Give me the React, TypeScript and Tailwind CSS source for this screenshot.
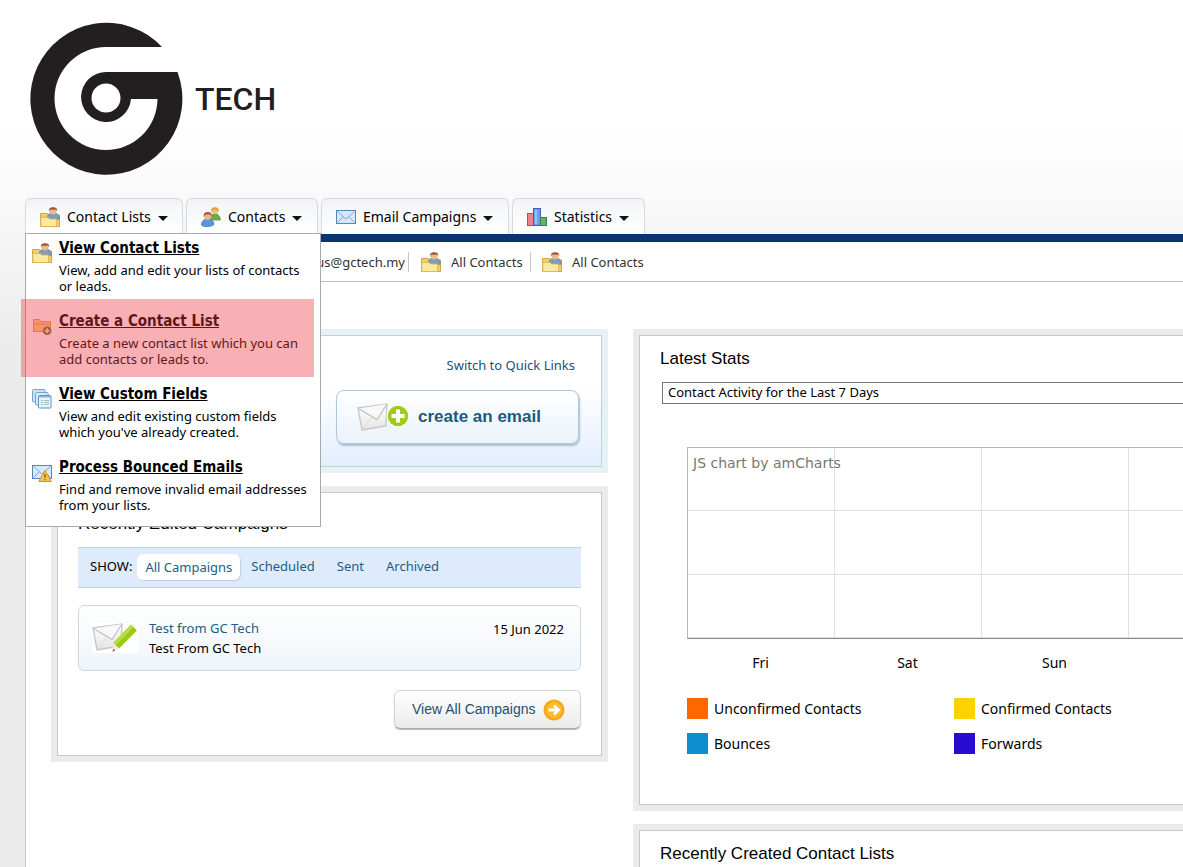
import React from 'react';

const BODY = "font-['Noto_Sans','Open_Sans',sans-serif]";
const WIDE = "font-['DejaVu_Sans_Condensed','DejaVu_Sans',sans-serif]";
const ARIAL = "font-['Liberation_Sans',Arial,sans-serif]";

const FolderUserIcon = () => (
  <svg width="20" height="20" viewBox="0 0 20 20" className="shrink-0" aria-hidden="true">
    <path d="M0.5 6.5h7l1 1.5h11v11.5H0.5z" fill="#f3cf6a" stroke="#d3a348" />
    <path d="M7 12c0-4 2-6 6-6s6 1.500 6.500 6l-2.500.5H7z" fill="#7d9db9" stroke="#5f7f9c" strokeWidth=".7" />
    <circle cx="13" cy="4" r="3.500" fill="#eab98f" />
    <path d="M9 4.500C8.500 1 10.500.2 13 .2s4.700.8 4.200 4.300c-.6-1.600-1-2-2-2-2 .4-3.500.2-4.600 0-.8.3-1.300 1-1.600 2z" fill="#9a5a34" />
    <path d="M.8 10.500h7.500l1 1.500h7.200v7.500H.8z" fill="#fbe9a0" stroke="#dcb254" strokeWidth=".8" />
  </svg>
);

const PeopleIcon = () => (
  <svg width="20" height="20" viewBox="0 0 20 20" className="shrink-0" aria-hidden="true">
    <path d="M9 13c0-4 2-6 5-6s5.300 2 5.300 6z" fill="#6cb04d" stroke="#4a8b34" strokeWidth=".7" />
    <circle cx="14" cy="4" r="3.300" fill="#efc07c" />
    <path d="M10.400 5c-.7-3.500 1.100-4.800 3.600-4.800S18.200 1.500 17.700 5c-.6-1.700-1.500-2.200-3.500-2.200S11 3.400 10.400 5z" fill="#e0a232" />
    <path d="M.5 18c0-4 2.500-6 6.300-6s6 2 6 5.500c-2 2.500-10 3-12.300.5z" fill="#5b93e0" stroke="#356bb9" strokeWidth=".7" />
    <circle cx="6.800" cy="9.300" r="3.700" fill="#e9b58b" />
    <path d="M2.800 10c-.6-4 1.500-5 4-5s4.500 1.200 4 5c-.7-2-1.700-2.400-3.800-2.400S3.500 8 2.800 10z" fill="#a65e3c" />
  </svg>
);

const MailIcon = ({ warn = false }: { warn?: boolean }) => (
  <svg width="20" height="20" viewBox="0 0 20 20" className="shrink-0" aria-hidden="true">
    <rect x=".5" y="3.500" width="19" height="13" fill="#d7e8fa" stroke="#5585bd" />
    <path d="M1.500 4.500l8.500 7.500 8.500-7.500M1.500 15.500l6-6M18.500 15.500l-6-6" fill="none" stroke="#83a9d6" />
    {warn && (
      <>
        <path d="M13 8.500l6.300 11H6.700z" fill="#f8c44f" stroke="#cf9327" strokeLinejoin="round" />
        <path d="M13 12v4M13 17v1.300" stroke="#8a5a12" strokeWidth="1.300" />
      </>
    )}
  </svg>
);

const BarsIcon = () => (
  <svg width="20" height="18" viewBox="0 0 20 18" className="shrink-0" aria-hidden="true">
    <rect x=".5" y="5.500" width="6" height="12" fill="#ee8087" stroke="#c5474f" />
    <rect x="6.500" y=".5" width="7" height="17" fill="#6d9ce8" stroke="#3763b4" />
    <rect x="8" y="2" width="2" height="14" fill="#9dc0f5" />
    <rect x="13.500" y="9.500" width="6" height="8" fill="#67b06c" stroke="#3d7f47" />
  </svg>
);

const FolderAddIcon = () => (
  <svg width="20" height="20" viewBox="0 0 20 20" className="shrink-0" aria-hidden="true">
    <path d="M1.500 15.500v-12h6l1.500 2h9.500v10z" fill="#f9d08a" stroke="#e0a050" />
    <path d="M1.500 8h17" stroke="#e0a050" />
    <circle cx="15.200" cy="14.800" r="4.300" fill="#72743a" />
    <path d="M15.200 12.300v5M12.700 14.800h5" stroke="#e8f0d0" strokeWidth="1.600" />
  </svg>
);

const FieldsIcon = () => (
  <svg width="20" height="20" viewBox="0 0 20 20" className="shrink-0" aria-hidden="true">
    <rect x=".5" y=".5" width="12.500" height="12.500" rx="1" fill="#cfe2f5" stroke="#76a3d0" />
    <rect x="3.500" y="3.500" width="12.500" height="12.500" rx="1" fill="#d9e9f8" stroke="#76a3d0" />
    <rect x="6.500" y="6.500" width="12.500" height="12.500" rx="1" fill="#eaf4fd" stroke="#5f92c4" />
    <path d="M7 7.800h12" stroke="#8fb8df" strokeWidth="1.600" />
    <path d="M9 11.500h2M12 11.500h5M9 13.500h2M12 13.500h5M9 15.500h2M12 15.500h5" stroke="#9dbcc4" />
  </svg>
);

const EnvelopeArt = () => (
  <>
    <path d="M1 5l29-4-1 22L5 27z" fill="url(#paper)" stroke="#c4c4c4" strokeWidth="1.300" />
    <path d="M1.500 5.500L20 16.500 30 1" fill="#f8f8f8" stroke="#c2c2c2" strokeWidth="1.300" />
    <path d="M5 26.500l10-12" stroke="#dedede" />
    <defs>
      <linearGradient id="paper" x1="0" y1="0" x2="0" y2="1">
        <stop offset="0" stopColor="#fff" />
        <stop offset="1" stopColor="#e4e4e4" />
      </linearGradient>
    </defs>
  </>
);

const NewEmailIcon = () => (
  <svg width="52" height="28" viewBox="0 0 52 28" className="shrink-0" aria-hidden="true">
    <EnvelopeArt />
    <circle cx="41" cy="13" r="11.500" fill="#fff" />
    <circle cx="41" cy="13" r="10.300" fill="#9fcb1b" />
    <path d="M41 6.500v13M34.500 13h13" stroke="#fff" strokeWidth="4" />
  </svg>
);

const EditEmailIcon = () => (
  <svg width="46" height="30" viewBox="0 0 46 30" className="shrink-0" aria-hidden="true">
    <rect width="46" height="30" fill="#fff" />
    <EnvelopeArt />
    <path d="M39 1.500l6 6L27 25.500l-6-5.500z" fill="#9cc918" />
    <path d="M39 1.500l2.500 2.500L23.500 22.500l-2.500-2.500z" fill="#b9dd45" />
    <path d="M21 20l6 5.500-6.500 3z" fill="#f3ead0" />
    <path d="M20.300 28.800l1-3 2 1.800z" fill="#777" />
  </svg>
);

const Caret = () => (
  <svg width="10" height="5" viewBox="0 0 10 5" className="mt-1 shrink-0" aria-hidden="true">
    <path d="M0 0h10L5 5z" fill="#111" />
  </svg>
);

const tabs = [
  { label: 'Contact Lists', icon: <FolderUserIcon />, extraClasses: 'w-[158px]' },
  { label: 'Contacts', icon: <PeopleIcon />, extraClasses: 'w-[132px]' },
  { label: 'Email Campaigns', icon: <MailIcon />, extraClasses: 'w-[188px]' },
  { label: 'Statistics', icon: <BarsIcon />, extraClasses: 'w-[133px]' },
];

const menuItems = [
  {
    title: 'View Contact Lists',
    desc: 'View, add and edit your lists of contacts or leads.',
    icon: <FolderUserIcon />,
  },
  {
    title: 'Create a Contact List',
    desc: 'Create a new contact list which you can add contacts or leads to.',
    icon: <FolderAddIcon />,
    active: true,
  },
  {
    title: 'View Custom Fields',
    desc: "View and edit existing custom fields which you've already created.",
    icon: <FieldsIcon />,
  },
  {
    title: 'Process Bounced Emails',
    desc: 'Find and remove invalid email addresses from your lists.',
    icon: <MailIcon warn />,
  },
];

const legend = [
  { label: 'Unconfirmed Contacts', colorClass: 'bg-[#ff6600]' },
  { label: 'Confirmed Contacts', colorClass: 'bg-[#fcd202]' },
  { label: 'Bounces', colorClass: 'bg-[#0d8ecf]' },
  { label: 'Forwards', colorClass: 'bg-[#2a0cd0]' },
];

const Logo = () => (
  <a href="#" className="flex items-center gap-3 text-[#231f20] no-underline">
    <svg width="153" height="153" viewBox="0 0 153 153" className="shrink-0" aria-hidden="true">
      <path
        d="M132 25H76.500A51.500 51.500 0 1 0 127.500 77H101A25 25 0 1 1 76.500 50H147.500A76 76 0 1 1 132 25z"
        fill="#231f20"
      />
      <circle cx="76" cy="76" r="14.500" fill="#fff" />
    </svg>
    <span className="font-[Roboto,sans-serif] text-[32px] font-medium">TECH</span>
  </a>
);

interface PanelProps {
  outerClasses?: string;
  innerClasses?: string;
  children: React.ReactNode;
}

const Panel: React.FC<PanelProps> = ({
  outerClasses = 'border-[#ebebeb]',
  innerClasses = 'border-[#c8c8c8] bg-white',
  children,
}) => (
  <section className={`flex flex-col border-[6px] ${outerClasses}`}>
    <div className={`flex-1 border px-5 ${innerClasses}`}>{children}</div>
  </section>
);

const DropdownMenu = () => (
  <div className="absolute left-0 top-[35px] z-20 w-[296px] border border-[#a9a9a9] bg-white">
    {menuItems.map((item) => (
      <a key={item.title} href="#" className="relative flex h-[73px] gap-[7px] pl-[6px] pr-3 pt-1 text-black">
        <span className="pt-[5px]">{item.icon}</span>
        <span className="block">
          <span className={`block text-[15px] font-bold leading-5 underline ${WIDE}`}>{item.title}</span>
          <span className="mt-[4px] block text-[13px] leading-4">{item.desc}</span>
        </span>
        {item.active && <span className="absolute -left-[5px] -top-2 h-[78px] w-[293px] bg-[#ee3a44]/40" />}
      </a>
    ))}
  </div>
);

const Chart = () => (
  <div className="ml-[27px] mt-[43px] text-[14px]">
    <div className="relative grid h-[192px] grid-cols-[repeat(4,147px)] grid-rows-3 border-b border-l border-t border-b-[#888] border-l-[#b5b5b5] border-t-[#b5b5b5]">
      {Array.from({ length: 12 }, (_, i) => (
        <div key={i} className="border-b border-r border-[#e0e0e0]" />
      ))}
      <a
        href="#"
        className="absolute left-[5px] top-[5px] font-['DejaVu_Sans',sans-serif] text-[14px] leading-5 text-[#777]"
      >
        JS chart by amCharts
      </a>
    </div>
    <div className="mt-[14px] grid grid-cols-[repeat(4,147px)] text-center leading-5">
      <span>Fri</span>
      <span>Sat</span>
      <span>Sun</span>
    </div>
    <ul className="mt-[25px] grid grid-cols-[267px_1fr] gap-y-[14px]">
      {legend.map((l) => (
        <li key={l.label} className="flex items-center gap-[6px] leading-[21px]">
          <span className={`size-[21px] ${l.colorClass}`} />
          {l.label}
        </li>
      ))}
    </ul>
  </div>
);

export default function App() {
  return (
    <div
      className={`flex min-h-screen flex-col overflow-hidden bg-[linear-gradient(#ffffff_120px,#f9f9f9_200px,#ebebeb_350px)] pl-[25px] text-black ${BODY}`}
    >
      <header className="pl-[5px] pt-[22px]">
        <Logo />
      </header>

      <nav className="relative mt-[23px]">
        <div className="flex gap-[3px] border-b-8 border-[#06366f]">
          {tabs.map((t) => (
            <button
              key={t.label}
              className={`flex h-9 items-center gap-[7px] rounded-t-md border border-b-0 border-[#d5d9dc] bg-linear-to-b from-[#f1f4f6] to-white pl-[14px] text-[14px] ${t.extraClasses}`}
            >
              {t.icon}
              <span>{t.label}</span>
              <Caret />
            </button>
          ))}
        </div>
        <DropdownMenu />
      </nav>

      <main className="flex-1 border-l border-[#c8c8c8] bg-white">
        <div className="flex h-10 items-center border-b border-[#c0c0c0] text-[13px] text-[#333]">
          <a href="#" className="w-[383px] border-r border-[#c8c8c8] pr-[3px] text-right leading-5">
            us@gctech.my
          </a>
          <a href="#" className="flex w-[122px] items-center gap-[10px] border-r border-[#c8c8c8] pl-3 leading-5">
            <FolderUserIcon />
            All Contacts
          </a>
          <a href="#" className="flex items-center gap-[10px] pl-[11px] leading-5">
            <FolderUserIcon />
            All Contacts
          </a>
        </div>

        <div className="flex gap-[25px] pl-[25px] pt-[47px]">
          <div className="flex w-[557px] shrink-0 flex-col gap-[13px]">
            <Panel
              outerClasses="border-[#e6f1f3]"
              innerClasses="border-[#b4d6dc] bg-linear-to-b from-white from-40% to-[#e3eefd]"
            >
              <div className="flex h-[130px] flex-col items-end pr-[2px] pt-[19px]">
                <a href="#" className="mr-1 text-[13px] leading-5 text-[#1b5078]">
                  Switch to Quick Links
                </a>
                <button
                  className={`mt-[15px] flex h-[54px] w-[243px] items-center gap-[9px] rounded-lg border border-[#aec8da] bg-linear-to-b from-white to-[#eaf2fb] pl-5 text-[17px] font-bold text-[#1d5a80] shadow-[1px_2px_2px_#a9bfce] ${ARIAL}`}
                >
                  <NewEmailIcon />
                  create an email
                </button>
              </div>
            </Panel>

            <Panel>
              <h2 className={`pt-[21px] text-[17px] leading-5 ${ARIAL}`}>Recently Edited Campaigns</h2>
              <div className="mt-[13px] flex h-[41px] items-center border-y border-[#b9d3e8] bg-[#deebfc] pb-[2px] pl-3 text-[13px] text-[#1b5e86]">
                <span className="text-black">SHOW:</span>
                <a href="#" className="ml-[5px] rounded-md bg-white px-2 py-[2px] leading-[22px] shadow-[1px_1px_1px_#c3cfdd]">
                  All Campaigns
                </a>
                <a href="#" className="ml-[11px]">Scheduled</a>
                <a href="#" className="ml-[22px]">Sent</a>
                <a href="#" className="ml-[22px]">Archived</a>
              </div>
              <div className="mt-[17px] flex h-[66px] items-center rounded-md border border-[#c9d8e2] bg-linear-to-b from-white to-[#eff5fa] pl-[13px] pr-4 text-[13px] leading-5">
                <EditEmailIcon />
                <div className="ml-[11px] flex-1">
                  <a href="#" className="block text-[#1b5e86]">Test from GC Tech</a>
                  <p>Test From GC Tech</p>
                </div>
                <span className="self-start pt-[13px]">15 Jun 2022</span>
              </div>
              <div className="flex justify-end pb-[26px] pt-[19px]">
                <button
                  className={`flex h-[39px] w-[187px] items-center gap-2 rounded-md border border-[#d5d5d5] border-b-[#aaa] bg-linear-to-b from-white to-[#ebebeb] pl-[17px] text-[14px] text-[#27506f] shadow-[0_1px_1px_#bbb] ${ARIAL}`}
                >
                  View All Campaigns
                  <svg width="22" height="22" viewBox="0 0 22 22" className="shrink-0" aria-hidden="true">
                    <circle cx="11" cy="11" r="10.500" fill="#f5a81c" />
                    <circle cx="11" cy="11" r="8" fill="#fbbb2e" />
                    <path d="M5.500 11h9M11 6.500l4.500 4.500-4.500 4.500" fill="none" stroke="#fff" strokeWidth="2.800" />
                  </svg>
                </button>
              </div>
            </Panel>
          </div>

          {/* right column runs off the window edge */}
          <div className="-mr-8 flex min-w-0 flex-1 flex-col gap-[13px]">
            <Panel>
              <div className="h-[468px] pt-[13px]">
                <h2 className={`text-[17px] leading-5 ${ARIAL}`}>Latest Stats</h2>
                <select
                  aria-label="Statistics report"
                  className="ml-[2px] mt-[13px] block h-[22px] w-full appearance-none border border-[#767676] bg-white pl-[5px] text-[13px]"
                >
                  <option>Contact Activity for the Last 7 Days</option>
                </select>
                <Chart />
              </div>
            </Panel>
            <Panel outerClasses="border-[#ebebeb] border-b-0" innerClasses="border-[#c8c8c8] border-b-0 bg-white">
              <h2 className={`pb-1 pt-[13px] text-[17px] leading-5 ${ARIAL}`}>Recently Created Contact Lists</h2>
            </Panel>
          </div>
        </div>
      </main>
    </div>
  );
}
